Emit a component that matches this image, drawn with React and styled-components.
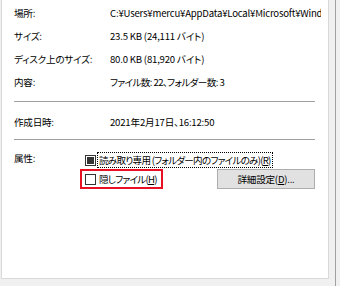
import React from 'react';
import styled, { createGlobalStyle } from 'styled-components';

const GlobalStyle = createGlobalStyle`
  html, body {
    margin: 0;
    padding: 0;
    background: #f0f0f0;
  }
  body {
    font-family: "Noto Sans CJK JP", "Noto Sans", sans-serif;
    font-size: 9.6px;
    font-feature-settings: "palt";
    letter-spacing: -0.25px;
    color: #000;
  }
`;

const Window = styled.div`
  width: 340px;
  height: 286px;
  display: flex;
  flex-direction: row;
  overflow: hidden;
  background: #f0f0f0;
`;

const Panel = styled.div`
  margin-left: 1px;
  width: 328px;
  height: 279px;
  background: #fff;
  border: 1px solid #d9d9d9;
  border-top: none;
  padding: 1px 12px 0 12px;
  box-sizing: border-box;
`;

const Gutter = styled.div`
  flex: 1;
  display: flex;
  justify-content: flex-end;
  padding-right: 4px;
`;

const Edge = styled.div`
  width: 1px;
  height: 100%;
  background: #a0a0a0;
`;

const Row = styled.div`
  display: grid;
  grid-template-columns: 96px 1fr;
  height: 23px;
  align-items: center;
  white-space: nowrap;
`;

const Label = styled.span``;

const Value = styled.span`
  overflow: hidden;
  width: 211px;
  letter-spacing: ${(p) => (p.tight ? '-0.6px' : '-0.2px')};
`;

const Divider = styled.div`
  height: 1px;
  background: #a0a0a0;
  margin: ${(p) => p.margin};
  width: 301px;
`;

const AttrGrid = styled.div`
  display: grid;
  grid-template-columns: 66px 1fr;
  align-items: start;
`;

const AttrLabel = styled.div`
  padding-top: 11px;
`;

const AttrList = styled.div`
  display: flex;
  flex-direction: column;
  padding-top: 11px;
`;

const CheckRow = styled.div`
  display: flex;
  align-items: center;
  justify-content: space-between;
  height: ${(p) => p.h}px;
`;

const CheckLabel = styled.label`
  display: inline-flex;
  align-items: center;
  gap: 2px;
  height: 20px;
  padding: 0 3px;
  box-sizing: border-box;
  border: 2px solid ${(p) => (p.highlight ? '#e81123' : 'transparent')};
  white-space: nowrap;
`;

const Box = styled.span`
  width: 11px;
  height: 11px;
  border: 1px solid #333;
  background: #fff;
  display: inline-flex;
  align-items: center;
  justify-content: center;
  box-sizing: border-box;
  &::after {
    content: '';
    display: ${(p) => (p.mixed ? 'block' : 'none')};
    width: 7px;
    height: 7px;
    background: #333;
  }
`;

const Text = styled.span`
  line-height: 14px;
  outline: ${(p) => (p.focused ? '1px dotted #000' : 'none')};
  outline-offset: 0;
  padding: 0 1px;
  letter-spacing: ${(p) => (p.tight ? '-0.75px' : '-0.25px')};
`;

const Key = styled.u`
  text-decoration: underline;
`;

const Button = styled.button`
  width: 98px;
  height: 20px;
  margin-right: 1px;
  background: #e1e1e1;
  border: 1px solid #adadad;
  font-family: inherit;
  font-size: 9.6px;
  font-feature-settings: "palt";
  letter-spacing: -0.25px;
  color: #000;
  padding: 0;
`;

export default function App() {
  return (
    <>
      <GlobalStyle />
      <Window>
        <Panel>
          <Row>
            <Label>場所:</Label>
            <Value>C:¥Users¥mercu¥AppData¥Local¥Microsoft¥Windows</Value>
          </Row>
          <Row>
            <Label>サイズ:</Label>
            <Value>23.5 KB (24,111 バイト)</Value>
          </Row>
          <Row>
            <Label>ディスク上のサイズ:</Label>
            <Value>80.0 KB (81,920 バイト)</Value>
          </Row>
          <Row>
            <Label>内容:</Label>
            <Value tight>ファイル数: 22、フォルダー数: 3</Value>
          </Row>
          <Divider margin="8px 0 8px 0" />
          <Row>
            <Label>作成日時:</Label>
            <Value>2021年2月17日、16:12:50</Value>
          </Row>
          <Divider margin="6px 0 0 0" />
          <AttrGrid>
            <AttrLabel>属性:</AttrLabel>
            <AttrList>
              <CheckRow h={18}>
                <CheckLabel>
                  <Box mixed />
                  <Text focused tight>
                    読み取り専用 (フォルダー内のファイルのみ)(<Key>R</Key>)
                  </Text>
                </CheckLabel>
              </CheckRow>
              <CheckRow h={20}>
                <CheckLabel highlight>
                  <Box />
                  <Text tight>
                    隠しファイル(<Key>H</Key>)
                  </Text>
                </CheckLabel>
                <Button>
                  詳細設定(<Key>D</Key>)...
                </Button>
              </CheckRow>
            </AttrList>
          </AttrGrid>
        </Panel>
        <Gutter>
          <Edge />
        </Gutter>
      </Window>
    </>
  );
}
